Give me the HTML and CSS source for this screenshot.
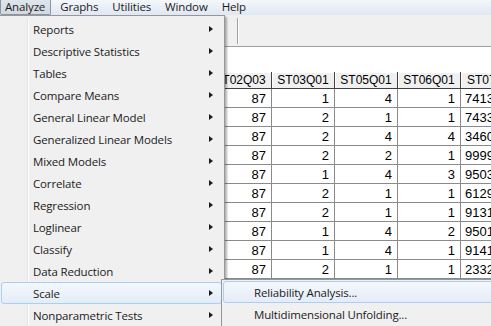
FILE: index.html
```html
<!DOCTYPE html>
<html lang="en">
<head>
    <meta charset="UTF-8">
    <title>Data Editor - Analyze</title>
    <link rel="stylesheet" href="styles.css">
</head>
<body>
    <div class="menubar">
        <span class="mb-item pressed">Analyze</span>
        <span class="mb-item">Graphs</span>
        <span class="mb-item">Utilities</span>
        <span class="mb-item">Window</span>
        <span class="mb-item">Help</span>
    </div>
    <div class="toolbar"><span class="sep"></span></div>
    <div class="editbar"></div>
    <div class="grid">
        <table>
            <tr class="head">
                <th>ST02Q03</th><th>ST03Q01</th><th>ST05Q01</th><th>ST06Q01</th><th>ST07Q01</th>
            </tr>
            <tr><td>87</td><td>1</td><td>4</td><td>1</td><td class="str">7413</td></tr>
            <tr><td>87</td><td>2</td><td>1</td><td>1</td><td class="str">7433</td></tr>
            <tr><td>87</td><td>2</td><td>4</td><td>4</td><td class="str">3460</td></tr>
            <tr><td>87</td><td>2</td><td>2</td><td>1</td><td class="str">9999</td></tr>
            <tr><td>87</td><td>1</td><td>4</td><td>3</td><td class="str">9503</td></tr>
            <tr><td>87</td><td>2</td><td>1</td><td>1</td><td class="str">6129</td></tr>
            <tr><td>87</td><td>2</td><td>1</td><td>1</td><td class="str">9131</td></tr>
            <tr><td>87</td><td>1</td><td>4</td><td>2</td><td class="str">9501</td></tr>
            <tr><td>87</td><td>1</td><td>4</td><td>1</td><td class="str">9141</td></tr>
            <tr><td>87</td><td>2</td><td>1</td><td>1</td><td class="str">2332</td></tr>
            <tr><td>87</td><td>1</td><td>4</td><td>1</td><td class="str">9141</td></tr>
        </table>
    </div>

    <div class="menu main">
        <div class="item sub">Reports</div>
        <div class="item sub">Descriptive Statistics</div>
        <div class="item sub">Tables</div>
        <div class="item sub">Compare Means</div>
        <div class="item sub">General Linear Model</div>
        <div class="item sub">Generalized Linear Models</div>
        <div class="item sub">Mixed Models</div>
        <div class="item sub">Correlate</div>
        <div class="item sub">Regression</div>
        <div class="item sub">Loglinear</div>
        <div class="item sub">Classify</div>
        <div class="item sub">Data Reduction</div>
        <div class="item sub active">Scale</div>
        <div class="item sub">Nonparametric Tests</div>
    </div>

    <div class="menu cascade">
        <div class="item active">Reliability Analysis...</div>
        <div class="item">Multidimensional Unfolding...</div>
    </div>
</body>
</html>
```

FILE: styles.css
```css
body {
    margin: 0;
    width: 491px;
    height: 326px;
    overflow: hidden;
    position: relative;
    background: #f0f0f0;
    font-family: "Open Sans", "Liberation Sans", sans-serif;
    font-size: 11.5px;
    letter-spacing: -0.15px;
    color: #1b1b1b;
}
.menubar {
    height: 15px;
    display: flex;
    background: linear-gradient(#f4f7fc, #dfe7f2);
}
.mb-item {
    height: 15px;
    line-height: 14px;
    padding: 0 6px 0 5px;
    margin-right: 3px;
    box-sizing: border-box;
}
.mb-item.pressed {
    border: 1px solid #8f959c;
    border-top: none;
    border-radius: 0 0 2px 2px;
    background: linear-gradient(#dfe5ec, #d2d9e2);
    padding: 0 5px 0 4px;
    margin-right: 4px;
}
.toolbar {
    height: 31px;
    border-bottom: 1px solid #a0a0a0;
    position: relative;
}
.toolbar .sep {
    position: absolute;
    left: 237px;
    top: 3px;
    height: 26px;
    border-left: 1px solid #a0a0a0;
    border-right: 1px solid #fff;
}
.editbar {
    height: 25px;
    background: #fff;
}
.grid {
    background: #fff;
    height: 254px;
    padding-left: 209px;
    overflow: hidden;
}
.grid table {
    width: 378px;
    border-collapse: separate;
    border-spacing: 0;
    table-layout: fixed;
    font-family: "Liberation Sans", Arial, sans-serif;
    font-size: 13px;
    letter-spacing: 0;
    color: #000;
}
.grid th, .grid td {
    width: 63px;
    padding: 0 5px 0 0;
    box-sizing: border-box;
    border-right: 1px solid #8a8a8a;
    border-bottom: 1px solid #8a8a8a;
    height: 19px;
    text-align: right;
    white-space: nowrap;
    overflow: hidden;
}
.grid th:last-child, .grid td:last-child { width: 126px; }
.grid .head th {
    height: 17px;
    font-weight: normal;
    font-size: 12px;
    text-align: center;
    padding: 0;
    background: #f0f0f0;
    border-right: 1px solid #404040;
    border-bottom: 1px solid #404040;
    box-shadow: inset 1px 1px #fff;
}
.grid .head th:last-child { text-align: left; padding-left: 6px; }
.grid td.str { text-align: left; padding: 0 0 0 4px; }
.menu {
    position: absolute;
    background: #f0f0f0;
    border: 1px solid #979797;
    box-sizing: border-box;
    box-shadow: 2px 2px 2px rgba(0, 0, 0, 0.3);
}
.menu.main {
    left: 0;
    top: 15px;
    width: 225px;
    padding: 2px 2px 2px 1px;
    border-left: none;
}
.menu.main::before {
    content: "";
    position: absolute;
    left: 27px;
    top: 2px;
    bottom: 0;
    border-left: 1px solid #e2e3e3;
    border-right: 1px solid #fff;
}
.menu.cascade {
    left: 221px;
    top: 279px;
    width: 300px;
    height: 60px;
    padding: 1px 0 0 1px;
}
.item {
    position: relative;
    height: 22px;
    line-height: 21px;
    padding-left: 31px;
    box-sizing: border-box;
    border: 1px solid transparent;
    border-radius: 3px;
}
.cascade .item { padding-left: 30px; }
.item.sub::after {
    content: "";
    position: absolute;
    right: 8px;
    top: 7px;
    border-left: 4px solid #1a1a1a;
    border-top: 3.5px solid transparent;
    border-bottom: 3.5px solid transparent;
}
.item.active {
    border-color: #aecdf2;
    background: linear-gradient(#f4f8fd, #e4ecf7);
}
```
